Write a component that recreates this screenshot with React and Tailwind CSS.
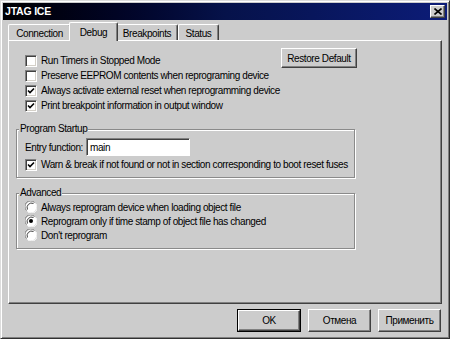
import React from "react"

const font = "font-['Liberation_Sans',Arial,sans-serif] text-[10px] tracking-[-0.4px] text-black"

function Check({ checked }) {
	return (
		<span className="relative flex items-center justify-center w-[12px] h-[12px] shrink-0 bg-white border-t border-l border-t-[#808080] border-l-[#808080] border-b border-r border-b-white border-r-white shadow-[inset_1px_1px_0_#404040,inset_-1px_-1px_0_#d4d0c8]">
			{checked && (
				<svg width="8" height="8" viewBox="0 0 8 8">
					<polyline points="1,3.5 3,5.5 7,1.5" fill="none" stroke="#000" strokeWidth="1.6" />
				</svg>
			)}
		</span>
	)
}

function Radio({ checked }) {
	return (
		<svg width="12" height="12" viewBox="0 0 12 12" className="shrink-0">
			<circle cx="6" cy="6" r="5.5" fill="#fff" />
			<path d="M1.5 9.5 A5.5 5.5 0 0 1 9.5 1.5" fill="none" stroke="#808080" strokeWidth="1" />
			<path d="M2.5 8.5 A4.5 4.5 0 0 1 8.5 2.5" fill="none" stroke="#404040" strokeWidth="1" />
			<path d="M10.5 2.5 A5.5 5.5 0 0 1 2.5 10.5" fill="none" stroke="#fff" strokeWidth="1" />
			{checked && <circle cx="6" cy="6" r="2" fill="#000" />}
		</svg>
	)
}

function Row({ children, h = "h-[15px]" }) {
	return <div className={`flex items-center gap-[4px] whitespace-nowrap ${h}`}>{children}</div>
}

function Btn({ children, className = "", def }) {
	const inner = (
		<span className="flex items-center justify-center w-full h-full bg-[#cccccc] border-t border-l border-t-white border-l-white border-r border-b border-r-[#404040] border-b-[#404040] shadow-[inset_-1px_-1px_0_#808080]">
			{children}
		</span>
	)
	if (def) return <span className={`flex border border-black ${className}`}>{inner}</span>
	return <span className={`flex ${className}`}>{inner}</span>
}

function Group({ title, children, className = "" }) {
	return (
		<fieldset className={`border border-[#8a8a8a] shadow-[inset_1px_1px_0_#fff,1px_1px_0_#fff] ml-[7px] w-[339px] ${className}`}>
			<legend className="ml-[2px] px-[1px] bg-[#cccccc] leading-[12px]">{title}</legend>
			{children}
		</fieldset>
	)
}

function Tab({ label, width, selected }) {
	if (selected) {
		return (
			<div className={`relative z-10 -mx-[2px] -mb-px h-[19px] ${width} bg-[#cccccc] border-t border-l border-t-white border-l-white border-r border-r-[#404040] shadow-[inset_-1px_0_0_#808080] rounded-t-[2px] flex justify-center pt-[2px]`}>
				{label}
			</div>
		)
	}
	return (
		<div className={`h-[16px] ${width} bg-[#cccccc] border-t border-l border-t-white border-l-white border-r border-r-[#404040] shadow-[inset_-1px_0_0_#808080] rounded-t-[2px] flex justify-center pt-[1px]`}>
			{label}
		</div>
	)
}

export default function App() {
	return (
		<div className={`w-[450px] h-[339px] bg-[#cccccc] border border-t-[#dcdcdc] border-l-[#dcdcdc] border-r-[#303030] border-b-[#303030] shadow-[inset_1px_1px_0_#fff,inset_-1px_-1px_0_#808080] p-[2px] flex flex-col ${font}`}>
			<div className="h-[17px] shrink-0 flex items-center justify-between bg-linear-to-r from-[#000004] via-[#06124a] to-[#0c1c78] pl-[2px] pr-[2px]">
				<span className="text-white font-bold text-[10.5px] tracking-[-0.2px]">JTAG ICE</span>
				<span className="flex items-center justify-center w-[15px] h-[13px] bg-[#cccccc] border-t border-l border-t-white border-l-white border-r border-b border-r-[#404040] border-b-[#404040] shadow-[inset_-1px_-1px_0_#808080]">
					<svg width="8" height="7" viewBox="0 0 8 7">
						<path d="M0.5 0.5 L7.5 6.5 M7.5 0.5 L0.5 6.5" stroke="#000" strokeWidth="1.6" />
					</svg>
				</span>
			</div>

			<div className="h-[20px] shrink-0 flex items-end pl-[5px]">
				<Tab label="Connection" width="w-[63px]" />
				<Tab label="Debug" width="w-[49px]" selected />
				<Tab label="Breakpoints" width="w-[62px]" />
				<Tab label="Status" width="w-[41px]" />
			</div>

			<div className="h-[264px] shrink-0 mx-[5px] border-t border-l border-t-white border-l-white border-r border-b border-r-[#404040] border-b-[#404040] shadow-[inset_-1px_-1px_0_#808080]">
				<div className="flex pt-[7px] pl-[16px]">
					<div className="w-[256px] mt-[5px]">
						<Row><Check /><span>Run Timers in Stopped Mode</span></Row>
						<Row><Check /><span>Preserve EEPROM contents when reprograming device</span></Row>
						<Row><Check checked /><span>Always activate external reset when reprogramming device</span></Row>
						<Row><Check checked /><span>Print breakpoint information in output window</span></Row>
					</div>
					<Btn className="w-[76px] h-[20px]">Restore Default</Btn>
				</div>

				<Group title="Program Startup" className="mt-[10px] pb-[5px]">
					<div className="pl-[8px]">
						<div className="flex items-center mt-[3px] h-[18px]">
							<span className="w-[61px]">Entry function:</span>
							<span className="flex items-center w-[104px] h-[18px] pl-[3px] bg-white border-t border-l border-t-[#808080] border-l-[#808080] border-b border-r border-b-white border-r-white shadow-[inset_1px_1px_0_#404040]">main</span>
						</div>
						<div className="mt-[1px]">
							<Row><Check checked /><span>Warn &amp; break if not found or not in section corresponding to boot reset fuses</span></Row>
						</div>
					</div>
				</Group>

				<Group title="Advanced" className="mt-[9px] pb-[6px]">
					<div className="pl-[8px] pt-[1px]">
						<Row h="h-[14px]"><Radio /><span>Always reprogram device when loading object file</span></Row>
						<Row h="h-[14px]"><Radio checked /><span>Reprogram only if time stamp of object file has changed</span></Row>
						<Row h="h-[14px]"><Radio /><span>Don't reprogram</span></Row>
					</div>
				</Group>
			</div>

			<div className="flex justify-end gap-[7px] pr-[6px] mt-[5px] h-[23px] shrink-0">
				<Btn def className="w-[64px] h-[23px]">OK</Btn>
				<Btn className="w-[63px] h-[23px]">Отмена</Btn>
				<Btn className="w-[63px] h-[23px]">Применить</Btn>
			</div>
		</div>
	)
}
